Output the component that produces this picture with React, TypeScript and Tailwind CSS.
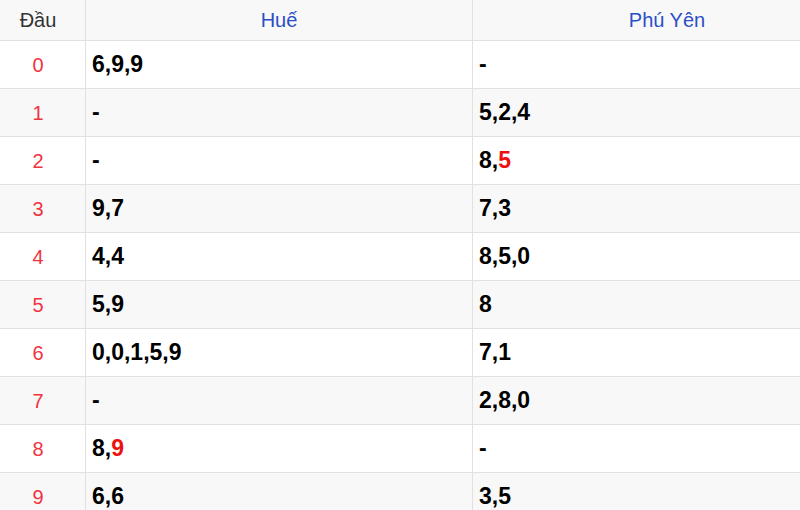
import React from "react";

type Part = { t: string; red?: boolean };
const rows: { d: string; hue: Part[]; py: Part[] }[] = [
  { d: "0", hue: [{ t: "6,9,9" }], py: [{ t: "-" }] },
  { d: "1", hue: [{ t: "-" }], py: [{ t: "5,2,4" }] },
  { d: "2", hue: [{ t: "-" }], py: [{ t: "8," }, { t: "5", red: true }] },
  { d: "3", hue: [{ t: "9,7" }], py: [{ t: "7,3" }] },
  { d: "4", hue: [{ t: "4,4" }], py: [{ t: "8,5,0" }] },
  { d: "5", hue: [{ t: "5,9" }], py: [{ t: "8" }] },
  { d: "6", hue: [{ t: "0,0,1,5,9" }], py: [{ t: "7,1" }] },
  { d: "7", hue: [{ t: "-" }], py: [{ t: "2,8,0" }] },
  { d: "8", hue: [{ t: "8," }, { t: "9", red: true }], py: [{ t: "-" }] },
  { d: "9", hue: [{ t: "6,6" }], py: [{ t: "3,5" }] },
];

function Val({ parts }: { parts: Part[] }) {
  return (
    <span>
      {parts.map((p, i) => (
        <span key={i} className={p.red ? "text-[#ee1111]" : "text-black"}>
          {p.t}
        </span>
      ))}
    </span>
  );
}

export default function App() {
  return (
    <div
      className="w-[800px] h-[510px] overflow-hidden bg-white"
      style={{ fontFamily: '"Liberation Sans", Arial, sans-serif' }}
    >
      <div className="w-[861px]">
        <div className="grid grid-cols-[86px_387px_388px] h-[41px] bg-[#f8f8f8] border-b border-[#e1e1e1] text-[20px]">
          <div className="flex items-center justify-center pr-[9px] border-r border-[#e1e1e1] text-[#333]">
            Đầu
          </div>
          <div className="flex items-center justify-center border-r border-[#e1e1e1] text-[#2b4fc7]">
            Huế
          </div>
          <div className="flex items-center justify-center text-[#2b4fc7]">
            Phú Yên
          </div>
        </div>
        {rows.map((r, i) => (
          <div
            key={r.d}
            className={`grid grid-cols-[86px_387px_388px] h-[48px] border-b border-[#e1e1e1] ${
              i % 2 === 1 ? "bg-[#f8f8f8]" : "bg-white"
            }`}
          >
            <div className="flex items-center justify-center pr-[9px] border-r border-[#e1e1e1] text-[20px] text-[#f0333f]">
              {r.d}
            </div>
            <div className="flex items-center pl-[6px] border-r border-[#e1e1e1] text-[23px] font-bold">
              <Val parts={r.hue} />
            </div>
            <div className="flex items-center pl-[6px] text-[23px] font-bold">
              <Val parts={r.py} />
            </div>
          </div>
        ))}
      </div>
    </div>
  );
}
